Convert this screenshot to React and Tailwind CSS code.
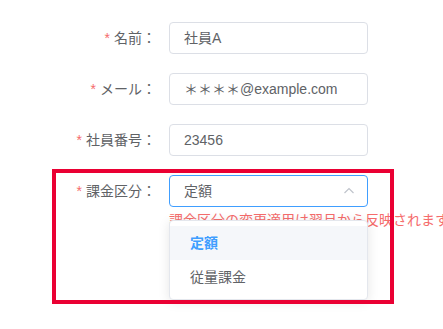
import React from 'react';

const font = { fontFamily: '"Liberation Sans", "Noto Sans CJK JP", sans-serif' };

function Label({ text }) {
  return (
    <div className="w-[169px] shrink-0 pr-[13px] text-right text-sm text-[#606266] leading-8">
      <span className="mr-1 text-[#f56c6c]">*</span>
      {text}：
    </div>
  );
}

function TextRow({ label, value }) {
  return (
    <div className="flex items-start mb-[19px]">
      <Label text={label} />
      <div className="w-[199px] h-8 border border-[#dcdfe6] rounded pl-[14px] pr-3 flex items-center text-sm text-[#606266]">
        {value}
      </div>
    </div>
  );
}

export default function App() {
  return (
    <div className="relative w-[443px] h-[329px] overflow-hidden bg-white" style={font}>
      <div className="pt-[22px]">
        <TextRow label="名前" value="社員A" />
        <TextRow label="メール" value="＊＊＊＊@example.com" />
        <TextRow label="社員番号" value="23456" />

        <div className="flex items-start">
          <Label text="課金区分" />
          <div className="relative w-[199px]">
            <div className="h-8 border border-[#409eff] rounded pl-[14px] pr-3 flex items-center justify-between text-sm text-[#606266]">
              <span>定額</span>
              <svg width="12" height="12" viewBox="0 0 12 12" fill="none" className="text-[#c0c4cc]">
                <polyline points="1.5,8 6,3.5 10.5,8" stroke="currentColor" strokeWidth="1.2" />
              </svg>
            </div>
            <div className="mt-[3px] text-sm leading-5 text-[#f56c6c] whitespace-nowrap">
              課金区分の変更適用は翌月から反映されます
            </div>

            {/* dropdown popup */}
            <div className="absolute left-0 top-[45px] w-[199px] bg-white border border-[#e4e7ed] rounded shadow-[0_2px_12px_0_rgba(0,0,0,0.1)] py-[5px] z-10">
              <div className="h-[34px] px-5 flex items-center text-sm font-bold text-[#409eff] bg-[#f5f7fa]">
                定額
              </div>
              <div className="h-[34px] px-5 flex items-center text-sm text-[#606266]">
                従量課金
              </div>
            </div>
          </div>
        </div>
      </div>

      {/* annotation box */}
      <div className="absolute left-[52px] top-[169px] w-[342px] h-[135px] border-4 border-[#ea0033] z-20 pointer-events-none" />
    </div>
  );
}
